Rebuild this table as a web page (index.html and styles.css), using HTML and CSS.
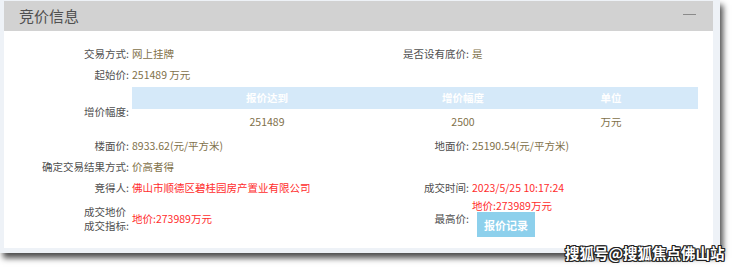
FILE: index.html
```html
<!DOCTYPE html>
<html lang="zh-CN">
<head>
<meta charset="utf-8">
<title>竞价信息</title>
<link rel="stylesheet" href="styles.css">
</head>
<body>
<div class="frame">
  <div class="panel">
    <div class="head">
      <h2 class="title">竞价信息</h2>
      <span class="minus"></span>
    </div>
    <div class="body">
      <div class="lbl">交易方式:</div>
      <div class="val">网上挂牌</div>
      <div class="lbl">是否设有底价:</div>
      <div class="val">是</div>

      <div class="lbl">起始价:</div>
      <div class="val">251489 万元</div>
      <div class="lbl"></div>
      <div class="val"></div>

      <div class="lbl mid">增价幅度:</div>
      <div class="tbl">
        <div class="th">报价达到</div>
        <div class="th">增价幅度</div>
        <div class="th">单位</div>
        <div class="td">251489</div>
        <div class="td">2500</div>
        <div class="td">万元</div>
      </div>

      <div class="lbl">楼面价:</div>
      <div class="val">8933.62(元/平方米)</div>
      <div class="lbl">地面价:</div>
      <div class="val">25190.54(元/平方米)</div>

      <div class="lbl">确定交易结果方式:</div>
      <div class="val">价高者得</div>
      <div class="lbl"></div>
      <div class="val"></div>

      <div class="lbl">竞得人:</div>
      <div class="val red">佛山市顺德区碧桂园房产置业有限公司</div>
      <div class="lbl">成交时间:</div>
      <div class="val red">2023/5/25 10:17:24</div>

      <div class="lbl last"><span class="two">成交地价<br>成交指标:</span></div>
      <div class="val red last">地价:273989万元</div>
      <div class="lbl last">最高价:</div>
      <div class="val last">
        <div class="stack">
          <div class="red small">地价:273989万元</div>
          <button class="btn">报价记录</button>
        </div>
      </div>
    </div>
  </div>
</div>
<div class="wm">搜狐号@搜狐焦点佛山站</div>
</body>
</html>
```
FILE: styles.css
```css
html, body {
  margin: 0;
  padding: 0;
  background: #ffffff;
}
body {
  width: 740px;
  height: 271px;
  position: relative;
  overflow: hidden;
  font-family: "Noto Sans CJK SC", "Noto Sans", sans-serif;
  font-size: 10.5px;
  color: #555555;
}
.frame {
  width: 709px;
  padding: 1px 7px 5px 4px;
  background: #eef2f7;
  box-shadow: 3px 5px 6px rgba(0, 0, 0, 0.7);
}
.panel {
  background: #ffffff;
}
.head {
  height: 30px;
  background: #d2d2d2;
  display: flex;
  align-items: center;
  justify-content: space-between;
  padding: 0 17px 0 15px;
}
.title {
  margin: 0;
  font-size: 15px;
  font-weight: normal;
  color: #505050;
  line-height: 30px;
}
.minus {
  width: 13px;
  height: 1px;
  background: #8a8a8a;
  margin-top: -3px;
}
.body {
  display: grid;
  grid-template-columns: 125px 214px 120px 1fr;
  column-gap: 3px;
  padding: 12px 0 11px 0;
}
.lbl {
  text-align: right;
  line-height: 21px;
  height: 21px;
  white-space: nowrap;
  color: #4f4f4f;
}
.val {
  line-height: 21px;
  height: 21px;
  white-space: nowrap;
  color: #7f714a;
}
.red {
  color: #ff2d2d;
}
.mid {
  height: auto;
  align-self: center;
  margin-top: 2px;
}
.tbl {
  grid-column: 2 / 5;
  margin: 2px 15px 0 0;
  display: grid;
  grid-template-columns: 270px 122px 1fr;
}
.th {
  background: #d5e9f9;
  color: #ffffff;
  font-weight: bold;
  text-align: center;
  height: 22px;
  line-height: 22px;
}
.td {
  text-align: center;
  height: 26px;
  line-height: 26px;
  color: #7f714a;
}
.last {
  height: 37px;
  margin-top: 2px;
  display: flex;
  align-items: center;
}
.lbl.last {
  justify-content: flex-end;
  line-height: 13.5px;
}
.two {
  display: inline-block;
  text-align: left;
}
.stack {
  display: flex;
  flex-direction: column;
  align-items: flex-start;
}
.small {
  line-height: 12px;
  height: 12px;
}
.btn {
  margin: 0 0 0 5px;
  width: 58px;
  height: 25px;
  border: none;
  background: #8dd0ec;
  color: #ffffff;
  font-family: "Noto Sans CJK SC", "Noto Sans", sans-serif;
  font-size: 11px;
  font-weight: bold;
  padding: 0;
}
.wm {
  position: absolute;
  left: 565px;
  top: 244px;
  font-size: 14.5px;
  font-weight: bold;
  color: #ffffff;
  line-height: 18px;
  white-space: nowrap;
  text-shadow: 1px 1px 0 #222, -1px -1px 0 #222, 1px -1px 0 #222, -1px 1px 0 #222, 0 1px 0 #222, 0 -1px 0 #222, 1px 0 0 #222, -1px 0 0 #222;
}
```
